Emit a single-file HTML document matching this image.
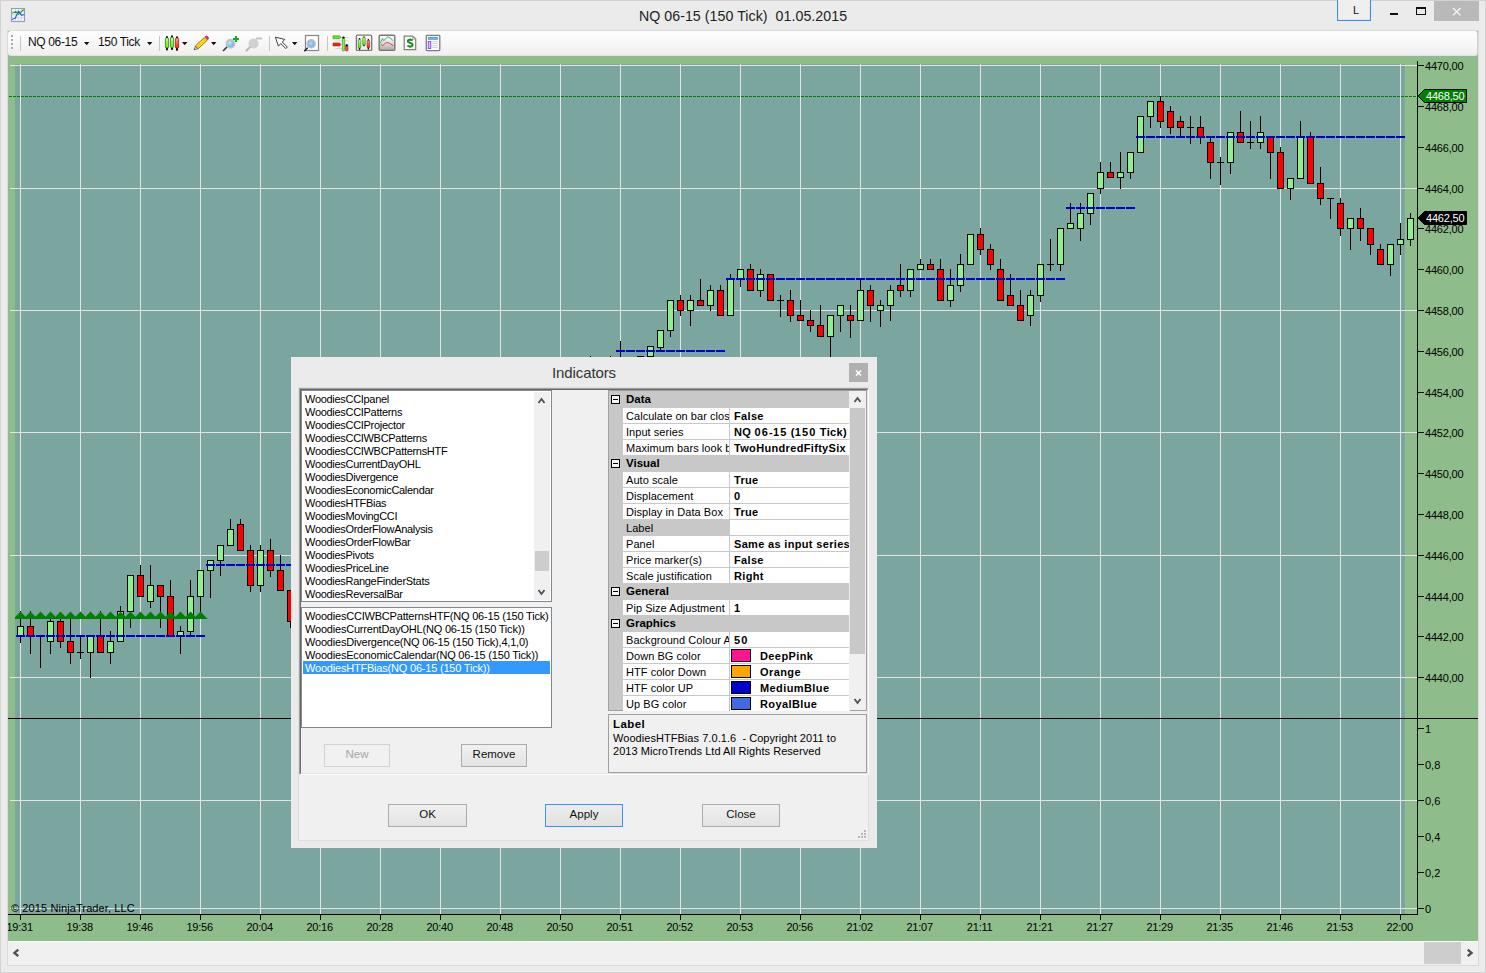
<!DOCTYPE html><html><head><meta charset="utf-8"><style>
*{box-sizing:border-box;margin:0;padding:0}
html,body{width:1486px;height:973px;overflow:hidden;background:#ebebeb;font-family:"Liberation Sans",sans-serif}
.abs{position:absolute}
.chart{position:absolute;left:0;top:0}
.txt{white-space:nowrap;color:#000}
.btn{text-align:center;font-size:11.5px;color:#111}
</style></head><body>
<svg class="chart" width="1486" height="973" viewBox="0 0 1486 973" shape-rendering="crispEdges">
<defs><clipPath id="teal"><rect x="15" y="64" width="1390" height="850"/></clipPath><clipPath id="plot"><rect x="15" y="64" width="1402" height="850"/></clipPath></defs>
<rect x="8" y="31" width="1470" height="910" fill="#8fbc8b"/>
<rect x="15" y="64" width="1390" height="850" fill="#7ba6a0"/>
<rect x="20" y="64" width="1" height="850" fill="#e4e4e4"/>
<rect x="80" y="64" width="1" height="850" fill="#e4e4e4"/>
<rect x="140" y="64" width="1" height="850" fill="#e4e4e4"/>
<rect x="200" y="64" width="1" height="850" fill="#e4e4e4"/>
<rect x="260" y="64" width="1" height="850" fill="#e4e4e4"/>
<rect x="320" y="64" width="1" height="850" fill="#e4e4e4"/>
<rect x="380" y="64" width="1" height="850" fill="#e4e4e4"/>
<rect x="440" y="64" width="1" height="850" fill="#e4e4e4"/>
<rect x="500" y="64" width="1" height="850" fill="#e4e4e4"/>
<rect x="560" y="64" width="1" height="850" fill="#e4e4e4"/>
<rect x="620" y="64" width="1" height="850" fill="#e4e4e4"/>
<rect x="680" y="64" width="1" height="850" fill="#e4e4e4"/>
<rect x="740" y="64" width="1" height="850" fill="#e4e4e4"/>
<rect x="800" y="64" width="1" height="850" fill="#e4e4e4"/>
<rect x="860" y="64" width="1" height="850" fill="#e4e4e4"/>
<rect x="920" y="64" width="1" height="850" fill="#e4e4e4"/>
<rect x="980" y="64" width="1" height="850" fill="#e4e4e4"/>
<rect x="1040" y="64" width="1" height="850" fill="#e4e4e4"/>
<rect x="1100" y="64" width="1" height="850" fill="#e4e4e4"/>
<rect x="1160" y="64" width="1" height="850" fill="#e4e4e4"/>
<rect x="1220" y="64" width="1" height="850" fill="#e4e4e4"/>
<rect x="1280" y="64" width="1" height="850" fill="#e4e4e4"/>
<rect x="1340" y="64" width="1" height="850" fill="#e4e4e4"/>
<rect x="1400" y="64" width="1" height="850" fill="#e4e4e4"/>
<rect x="10" y="65" width="1407" height="1" fill="#e4e4e4"/>
<rect x="10" y="188" width="1407" height="1" fill="#e4e4e4"/>
<rect x="10" y="310" width="1407" height="1" fill="#e4e4e4"/>
<rect x="10" y="432" width="1407" height="1" fill="#e4e4e4"/>
<rect x="10" y="555" width="1407" height="1" fill="#e4e4e4"/>
<rect x="10" y="677" width="1407" height="1" fill="#e4e4e4"/>
<rect x="10" y="800" width="1407" height="1" fill="#e4e4e4"/>
<rect x="10" y="908" width="1407" height="1" fill="#e4e4e4"/>
<line x1="9" y1="96.5" x2="1417" y2="96.5" stroke="#008000" stroke-width="1" stroke-dasharray="3 1"/>
<g clip-path="url(#plot)">
<rect x="20" y="611" width="1" height="32" fill="#000"/>
<rect x="17.5" y="626.5" width="6" height="10" fill="#90ee90" stroke="#000" stroke-width="1"/>
<rect x="30" y="611" width="1" height="43" fill="#000"/>
<rect x="27.5" y="626.5" width="6" height="10" fill="#ff0000" stroke="#000" stroke-width="1"/>
<rect x="40" y="636" width="1" height="32" fill="#000"/>
<rect x="37" y="636" width="7" height="1" fill="#000"/>
<rect x="50" y="616" width="1" height="38" fill="#000"/>
<rect x="47.5" y="621.5" width="6" height="20" fill="#90ee90" stroke="#000" stroke-width="1"/>
<rect x="60" y="616" width="1" height="32" fill="#000"/>
<rect x="57.5" y="621.5" width="6" height="20" fill="#ff0000" stroke="#000" stroke-width="1"/>
<rect x="70" y="616" width="1" height="48" fill="#000"/>
<rect x="67.5" y="641.5" width="6" height="11" fill="#ff0000" stroke="#000" stroke-width="1"/>
<rect x="80" y="637" width="1" height="22" fill="#000"/>
<rect x="77" y="652" width="7" height="1" fill="#000"/>
<rect x="90" y="636" width="1" height="42" fill="#000"/>
<rect x="87.5" y="636.5" width="6" height="16" fill="#90ee90" stroke="#000" stroke-width="1"/>
<rect x="100" y="611" width="1" height="42" fill="#000"/>
<rect x="97.5" y="636.5" width="6" height="16" fill="#ff0000" stroke="#000" stroke-width="1"/>
<rect x="110" y="631" width="1" height="33" fill="#000"/>
<rect x="107.5" y="641.5" width="6" height="11" fill="#90ee90" stroke="#000" stroke-width="1"/>
<rect x="120" y="606" width="1" height="36" fill="#000"/>
<rect x="117.5" y="611.5" width="6" height="30" fill="#90ee90" stroke="#000" stroke-width="1"/>
<rect x="130" y="575" width="1" height="53" fill="#000"/>
<rect x="127.5" y="575.5" width="6" height="36" fill="#90ee90" stroke="#000" stroke-width="1"/>
<rect x="140" y="565" width="1" height="32" fill="#000"/>
<rect x="137.5" y="575.5" width="6" height="21" fill="#ff0000" stroke="#000" stroke-width="1"/>
<rect x="150" y="565" width="1" height="43" fill="#000"/>
<rect x="147.5" y="585.5" width="6" height="16" fill="#90ee90" stroke="#000" stroke-width="1"/>
<rect x="160" y="585" width="1" height="43" fill="#000"/>
<rect x="157.5" y="585.5" width="6" height="11" fill="#ff0000" stroke="#000" stroke-width="1"/>
<rect x="170" y="580" width="1" height="57" fill="#000"/>
<rect x="167.5" y="596.5" width="6" height="40" fill="#ff0000" stroke="#000" stroke-width="1"/>
<rect x="180" y="626" width="1" height="28" fill="#000"/>
<rect x="177.5" y="631.5" width="6" height="5" fill="#90ee90" stroke="#000" stroke-width="1"/>
<rect x="190" y="580" width="1" height="57" fill="#000"/>
<rect x="187.5" y="596.5" width="6" height="35" fill="#90ee90" stroke="#000" stroke-width="1"/>
<rect x="200" y="570" width="1" height="43" fill="#000"/>
<rect x="197.5" y="570.5" width="6" height="26" fill="#90ee90" stroke="#000" stroke-width="1"/>
<rect x="210" y="560" width="1" height="38" fill="#000"/>
<rect x="207.5" y="560.5" width="6" height="10" fill="#90ee90" stroke="#000" stroke-width="1"/>
<rect x="220" y="545" width="1" height="31" fill="#000"/>
<rect x="217.5" y="545.5" width="6" height="15" fill="#90ee90" stroke="#000" stroke-width="1"/>
<rect x="230" y="519" width="1" height="27" fill="#000"/>
<rect x="227.5" y="529.5" width="6" height="16" fill="#90ee90" stroke="#000" stroke-width="1"/>
<rect x="240" y="519" width="1" height="32" fill="#000"/>
<rect x="237.5" y="524.5" width="6" height="26" fill="#ff0000" stroke="#000" stroke-width="1"/>
<rect x="250" y="545" width="1" height="47" fill="#000"/>
<rect x="247.5" y="550.5" width="6" height="35" fill="#ff0000" stroke="#000" stroke-width="1"/>
<rect x="260" y="545" width="1" height="47" fill="#000"/>
<rect x="257.5" y="550.5" width="6" height="35" fill="#90ee90" stroke="#000" stroke-width="1"/>
<rect x="270" y="539" width="1" height="38" fill="#000"/>
<rect x="267.5" y="550.5" width="6" height="20" fill="#ff0000" stroke="#000" stroke-width="1"/>
<rect x="280" y="555" width="1" height="36" fill="#000"/>
<rect x="277.5" y="570.5" width="6" height="20" fill="#ff0000" stroke="#000" stroke-width="1"/>
<rect x="290" y="590" width="1" height="38" fill="#000"/>
<rect x="287.5" y="590.5" width="6" height="31" fill="#ff0000" stroke="#000" stroke-width="1"/>
<rect x="590" y="356" width="1" height="45" fill="#000"/>
<rect x="587" y="380" width="7" height="1" fill="#000"/>
<rect x="610" y="356" width="1" height="45" fill="#000"/>
<rect x="607" y="380" width="7" height="1" fill="#000"/>
<rect x="620" y="341" width="1" height="50" fill="#000"/>
<rect x="617.5" y="360.5" width="6" height="20" fill="#90ee90" stroke="#000" stroke-width="1"/>
<rect x="640" y="380" width="1" height="21" fill="#000"/>
<rect x="637.5" y="356.5" width="6" height="34" fill="#90ee90" stroke="#000" stroke-width="1"/>
<rect x="650" y="346" width="1" height="45" fill="#000"/>
<rect x="647.5" y="346.5" width="6" height="10" fill="#90ee90" stroke="#000" stroke-width="1"/>
<rect x="660" y="330" width="1" height="21" fill="#000"/>
<rect x="657.5" y="330.5" width="6" height="17" fill="#90ee90" stroke="#000" stroke-width="1"/>
<rect x="670" y="300" width="1" height="37" fill="#000"/>
<rect x="667.5" y="300.5" width="6" height="30" fill="#90ee90" stroke="#000" stroke-width="1"/>
<rect x="680" y="295" width="1" height="21" fill="#000"/>
<rect x="677.5" y="300.5" width="6" height="10" fill="#ff0000" stroke="#000" stroke-width="1"/>
<rect x="690" y="295" width="1" height="31" fill="#000"/>
<rect x="687.5" y="300.5" width="6" height="10" fill="#90ee90" stroke="#000" stroke-width="1"/>
<rect x="700" y="279" width="1" height="27" fill="#000"/>
<rect x="697.5" y="300.5" width="6" height="5" fill="#ff0000" stroke="#000" stroke-width="1"/>
<rect x="710" y="285" width="1" height="26" fill="#000"/>
<rect x="707.5" y="290.5" width="6" height="15" fill="#90ee90" stroke="#000" stroke-width="1"/>
<rect x="720" y="285" width="1" height="31" fill="#000"/>
<rect x="717.5" y="290.5" width="6" height="25" fill="#ff0000" stroke="#000" stroke-width="1"/>
<rect x="730" y="274" width="1" height="42" fill="#000"/>
<rect x="727.5" y="279.5" width="6" height="36" fill="#90ee90" stroke="#000" stroke-width="1"/>
<rect x="740" y="269" width="1" height="18" fill="#000"/>
<rect x="737.5" y="269.5" width="6" height="10" fill="#90ee90" stroke="#000" stroke-width="1"/>
<rect x="750" y="264" width="1" height="27" fill="#000"/>
<rect x="747.5" y="269.5" width="6" height="21" fill="#ff0000" stroke="#000" stroke-width="1"/>
<rect x="760" y="269" width="1" height="28" fill="#000"/>
<rect x="757.5" y="274.5" width="6" height="16" fill="#90ee90" stroke="#000" stroke-width="1"/>
<rect x="770" y="274" width="1" height="27" fill="#000"/>
<rect x="767.5" y="274.5" width="6" height="26" fill="#ff0000" stroke="#000" stroke-width="1"/>
<rect x="780" y="295" width="1" height="22" fill="#000"/>
<rect x="777" y="300" width="7" height="1" fill="#000"/>
<rect x="790" y="290" width="1" height="32" fill="#000"/>
<rect x="787.5" y="300.5" width="6" height="15" fill="#ff0000" stroke="#000" stroke-width="1"/>
<rect x="800" y="300" width="1" height="21" fill="#000"/>
<rect x="797.5" y="315.5" width="6" height="5" fill="#ff0000" stroke="#000" stroke-width="1"/>
<rect x="810" y="310" width="1" height="22" fill="#000"/>
<rect x="807.5" y="320.5" width="6" height="5" fill="#ff0000" stroke="#000" stroke-width="1"/>
<rect x="820" y="305" width="1" height="32" fill="#000"/>
<rect x="817.5" y="325.5" width="6" height="11" fill="#ff0000" stroke="#000" stroke-width="1"/>
<rect x="830" y="315" width="1" height="42" fill="#000"/>
<rect x="827.5" y="315.5" width="6" height="21" fill="#90ee90" stroke="#000" stroke-width="1"/>
<rect x="840" y="305" width="1" height="27" fill="#000"/>
<rect x="837.5" y="305.5" width="6" height="10" fill="#90ee90" stroke="#000" stroke-width="1"/>
<rect x="850" y="305" width="1" height="33" fill="#000"/>
<rect x="847.5" y="315.5" width="6" height="5" fill="#ff0000" stroke="#000" stroke-width="1"/>
<rect x="860" y="279" width="1" height="42" fill="#000"/>
<rect x="857.5" y="290.5" width="6" height="30" fill="#90ee90" stroke="#000" stroke-width="1"/>
<rect x="870" y="285" width="1" height="37" fill="#000"/>
<rect x="867.5" y="290.5" width="6" height="15" fill="#ff0000" stroke="#000" stroke-width="1"/>
<rect x="880" y="300" width="1" height="27" fill="#000"/>
<rect x="877.5" y="305.5" width="6" height="5" fill="#90ee90" stroke="#000" stroke-width="1"/>
<rect x="890" y="285" width="1" height="36" fill="#000"/>
<rect x="887.5" y="290.5" width="6" height="15" fill="#90ee90" stroke="#000" stroke-width="1"/>
<rect x="900" y="264" width="1" height="33" fill="#000"/>
<rect x="897.5" y="285.5" width="6" height="5" fill="#ff0000" stroke="#000" stroke-width="1"/>
<rect x="910" y="269" width="1" height="28" fill="#000"/>
<rect x="907.5" y="269.5" width="6" height="21" fill="#90ee90" stroke="#000" stroke-width="1"/>
<rect x="920" y="259" width="1" height="11" fill="#000"/>
<rect x="917.5" y="264.5" width="6" height="5" fill="#90ee90" stroke="#000" stroke-width="1"/>
<rect x="930" y="259" width="1" height="11" fill="#000"/>
<rect x="927.5" y="264.5" width="6" height="5" fill="#ff0000" stroke="#000" stroke-width="1"/>
<rect x="940" y="259" width="1" height="42" fill="#000"/>
<rect x="937.5" y="269.5" width="6" height="31" fill="#ff0000" stroke="#000" stroke-width="1"/>
<rect x="950" y="269" width="1" height="38" fill="#000"/>
<rect x="947.5" y="285.5" width="6" height="15" fill="#90ee90" stroke="#000" stroke-width="1"/>
<rect x="960" y="254" width="1" height="38" fill="#000"/>
<rect x="957.5" y="264.5" width="6" height="21" fill="#90ee90" stroke="#000" stroke-width="1"/>
<rect x="970" y="234" width="1" height="31" fill="#000"/>
<rect x="967.5" y="234.5" width="6" height="30" fill="#90ee90" stroke="#000" stroke-width="1"/>
<rect x="980" y="228" width="1" height="27" fill="#000"/>
<rect x="977.5" y="234.5" width="6" height="15" fill="#ff0000" stroke="#000" stroke-width="1"/>
<rect x="990" y="244" width="1" height="26" fill="#000"/>
<rect x="987.5" y="249.5" width="6" height="15" fill="#ff0000" stroke="#000" stroke-width="1"/>
<rect x="1000" y="259" width="1" height="42" fill="#000"/>
<rect x="997.5" y="269.5" width="6" height="31" fill="#ff0000" stroke="#000" stroke-width="1"/>
<rect x="1010" y="274" width="1" height="32" fill="#000"/>
<rect x="1007.5" y="295.5" width="6" height="10" fill="#ff0000" stroke="#000" stroke-width="1"/>
<rect x="1020" y="290" width="1" height="31" fill="#000"/>
<rect x="1017.5" y="305.5" width="6" height="15" fill="#ff0000" stroke="#000" stroke-width="1"/>
<rect x="1030" y="290" width="1" height="36" fill="#000"/>
<rect x="1027.5" y="295.5" width="6" height="20" fill="#90ee90" stroke="#000" stroke-width="1"/>
<rect x="1040" y="264" width="1" height="38" fill="#000"/>
<rect x="1037.5" y="264.5" width="6" height="31" fill="#90ee90" stroke="#000" stroke-width="1"/>
<rect x="1050" y="239" width="1" height="32" fill="#000"/>
<rect x="1047" y="264" width="7" height="1" fill="#000"/>
<rect x="1060" y="228" width="1" height="43" fill="#000"/>
<rect x="1057.5" y="228.5" width="6" height="36" fill="#90ee90" stroke="#000" stroke-width="1"/>
<rect x="1070" y="203" width="1" height="26" fill="#000"/>
<rect x="1067.5" y="223.5" width="6" height="5" fill="#90ee90" stroke="#000" stroke-width="1"/>
<rect x="1080" y="203" width="1" height="38" fill="#000"/>
<rect x="1077.5" y="213.5" width="6" height="15" fill="#90ee90" stroke="#000" stroke-width="1"/>
<rect x="1090" y="193" width="1" height="32" fill="#000"/>
<rect x="1087.5" y="193.5" width="6" height="20" fill="#90ee90" stroke="#000" stroke-width="1"/>
<rect x="1100" y="162" width="1" height="32" fill="#000"/>
<rect x="1097.5" y="172.5" width="6" height="16" fill="#90ee90" stroke="#000" stroke-width="1"/>
<rect x="1110" y="162" width="1" height="16" fill="#000"/>
<rect x="1107.5" y="172.5" width="6" height="5" fill="#ff0000" stroke="#000" stroke-width="1"/>
<rect x="1120" y="152" width="1" height="37" fill="#000"/>
<rect x="1117.5" y="172.5" width="6" height="5" fill="#90ee90" stroke="#000" stroke-width="1"/>
<rect x="1130" y="152" width="1" height="27" fill="#000"/>
<rect x="1127.5" y="152.5" width="6" height="20" fill="#90ee90" stroke="#000" stroke-width="1"/>
<rect x="1140" y="116" width="1" height="37" fill="#000"/>
<rect x="1137.5" y="116.5" width="6" height="36" fill="#90ee90" stroke="#000" stroke-width="1"/>
<rect x="1150" y="101" width="1" height="27" fill="#000"/>
<rect x="1147.5" y="101.5" width="6" height="15" fill="#90ee90" stroke="#000" stroke-width="1"/>
<rect x="1160" y="96" width="1" height="32" fill="#000"/>
<rect x="1157.5" y="101.5" width="6" height="20" fill="#ff0000" stroke="#000" stroke-width="1"/>
<rect x="1170" y="106" width="1" height="28" fill="#000"/>
<rect x="1167.5" y="111.5" width="6" height="16" fill="#ff0000" stroke="#000" stroke-width="1"/>
<rect x="1180" y="116" width="1" height="21" fill="#000"/>
<rect x="1177.5" y="121.5" width="6" height="6" fill="#ff0000" stroke="#000" stroke-width="1"/>
<rect x="1190" y="116" width="1" height="28" fill="#000"/>
<rect x="1187" y="127" width="7" height="1" fill="#000"/>
<rect x="1200" y="116" width="1" height="28" fill="#000"/>
<rect x="1197.5" y="127.5" width="6" height="9" fill="#ff0000" stroke="#000" stroke-width="1"/>
<rect x="1210" y="137" width="1" height="42" fill="#000"/>
<rect x="1207.5" y="142.5" width="6" height="20" fill="#ff0000" stroke="#000" stroke-width="1"/>
<rect x="1220" y="157" width="1" height="28" fill="#000"/>
<rect x="1217" y="162" width="7" height="1" fill="#000"/>
<rect x="1230" y="132" width="1" height="42" fill="#000"/>
<rect x="1227.5" y="132.5" width="6" height="30" fill="#90ee90" stroke="#000" stroke-width="1"/>
<rect x="1240" y="111" width="1" height="32" fill="#000"/>
<rect x="1237.5" y="132.5" width="6" height="10" fill="#ff0000" stroke="#000" stroke-width="1"/>
<rect x="1250" y="121" width="1" height="28" fill="#000"/>
<rect x="1247" y="142" width="7" height="1" fill="#000"/>
<rect x="1260" y="116" width="1" height="33" fill="#000"/>
<rect x="1257.5" y="132.5" width="6" height="10" fill="#90ee90" stroke="#000" stroke-width="1"/>
<rect x="1270" y="137" width="1" height="42" fill="#000"/>
<rect x="1267.5" y="137.5" width="6" height="15" fill="#ff0000" stroke="#000" stroke-width="1"/>
<rect x="1280" y="147" width="1" height="42" fill="#000"/>
<rect x="1277.5" y="152.5" width="6" height="36" fill="#ff0000" stroke="#000" stroke-width="1"/>
<rect x="1290" y="178" width="1" height="22" fill="#000"/>
<rect x="1287.5" y="178.5" width="6" height="10" fill="#90ee90" stroke="#000" stroke-width="1"/>
<rect x="1300" y="121" width="1" height="58" fill="#000"/>
<rect x="1297.5" y="137.5" width="6" height="41" fill="#90ee90" stroke="#000" stroke-width="1"/>
<rect x="1310" y="132" width="1" height="52" fill="#000"/>
<rect x="1307.5" y="137.5" width="6" height="46" fill="#ff0000" stroke="#000" stroke-width="1"/>
<rect x="1320" y="167" width="1" height="38" fill="#000"/>
<rect x="1317.5" y="183.5" width="6" height="15" fill="#ff0000" stroke="#000" stroke-width="1"/>
<rect x="1330" y="198" width="1" height="21" fill="#000"/>
<rect x="1327" y="198" width="7" height="1" fill="#000"/>
<rect x="1340" y="198" width="1" height="38" fill="#000"/>
<rect x="1337.5" y="203.5" width="6" height="25" fill="#ff0000" stroke="#000" stroke-width="1"/>
<rect x="1350" y="218" width="1" height="32" fill="#000"/>
<rect x="1347.5" y="218.5" width="6" height="10" fill="#90ee90" stroke="#000" stroke-width="1"/>
<rect x="1360" y="208" width="1" height="33" fill="#000"/>
<rect x="1357.5" y="218.5" width="6" height="10" fill="#ff0000" stroke="#000" stroke-width="1"/>
<rect x="1370" y="228" width="1" height="27" fill="#000"/>
<rect x="1367.5" y="228.5" width="6" height="16" fill="#ff0000" stroke="#000" stroke-width="1"/>
<rect x="1380" y="244" width="1" height="21" fill="#000"/>
<rect x="1377.5" y="249.5" width="6" height="15" fill="#ff0000" stroke="#000" stroke-width="1"/>
<rect x="1390" y="244" width="1" height="32" fill="#000"/>
<rect x="1387.5" y="244.5" width="6" height="20" fill="#90ee90" stroke="#000" stroke-width="1"/>
<rect x="1400" y="223" width="1" height="32" fill="#000"/>
<rect x="1397.5" y="239.5" width="6" height="5" fill="#90ee90" stroke="#000" stroke-width="1"/>
<rect x="1410" y="213" width="1" height="33" fill="#000"/>
<rect x="1407.5" y="218.5" width="6" height="21" fill="#90ee90" stroke="#000" stroke-width="1"/>
</g>
<g fill="#0000cd">
<rect x="16" y="635" width="9" height="2"/>
<rect x="26" y="635" width="9" height="2"/>
<rect x="36" y="635" width="9" height="2"/>
<rect x="46" y="635" width="9" height="2"/>
<rect x="56" y="635" width="9" height="2"/>
<rect x="66" y="635" width="9" height="2"/>
<rect x="76" y="635" width="9" height="2"/>
<rect x="86" y="635" width="9" height="2"/>
<rect x="96" y="635" width="9" height="2"/>
<rect x="106" y="635" width="9" height="2"/>
<rect x="116" y="635" width="9" height="2"/>
<rect x="126" y="635" width="9" height="2"/>
<rect x="136" y="635" width="9" height="2"/>
<rect x="146" y="635" width="9" height="2"/>
<rect x="156" y="635" width="9" height="2"/>
<rect x="166" y="635" width="9" height="2"/>
<rect x="176" y="635" width="9" height="2"/>
<rect x="186" y="635" width="9" height="2"/>
<rect x="196" y="635" width="9" height="2"/>
<rect x="206" y="564" width="9" height="2"/>
<rect x="216" y="564" width="9" height="2"/>
<rect x="226" y="564" width="9" height="2"/>
<rect x="236" y="564" width="9" height="2"/>
<rect x="246" y="564" width="9" height="2"/>
<rect x="256" y="564" width="9" height="2"/>
<rect x="266" y="564" width="9" height="2"/>
<rect x="276" y="564" width="9" height="2"/>
<rect x="286" y="564" width="9" height="2"/>
<rect x="296" y="564" width="9" height="2"/>
<rect x="306" y="564" width="9" height="2"/>
<rect x="316" y="564" width="9" height="2"/>
<rect x="326" y="564" width="9" height="2"/>
<rect x="336" y="564" width="9" height="2"/>
<rect x="346" y="564" width="9" height="2"/>
<rect x="356" y="564" width="9" height="2"/>
<rect x="366" y="564" width="9" height="2"/>
<rect x="376" y="564" width="9" height="2"/>
<rect x="386" y="564" width="9" height="2"/>
<rect x="396" y="564" width="9" height="2"/>
<rect x="406" y="564" width="9" height="2"/>
<rect x="416" y="564" width="9" height="2"/>
<rect x="426" y="564" width="9" height="2"/>
<rect x="436" y="564" width="9" height="2"/>
<rect x="446" y="564" width="9" height="2"/>
<rect x="456" y="564" width="9" height="2"/>
<rect x="466" y="564" width="9" height="2"/>
<rect x="476" y="564" width="9" height="2"/>
<rect x="486" y="564" width="9" height="2"/>
<rect x="496" y="564" width="9" height="2"/>
<rect x="506" y="564" width="9" height="2"/>
<rect x="516" y="564" width="9" height="2"/>
<rect x="526" y="564" width="9" height="2"/>
<rect x="536" y="564" width="9" height="2"/>
<rect x="546" y="564" width="9" height="2"/>
<rect x="556" y="564" width="9" height="2"/>
<rect x="566" y="564" width="9" height="2"/>
<rect x="576" y="564" width="9" height="2"/>
<rect x="586" y="564" width="9" height="2"/>
<rect x="596" y="564" width="9" height="2"/>
<rect x="606" y="564" width="9" height="2"/>
<rect x="616" y="350" width="9" height="2"/>
<rect x="626" y="350" width="9" height="2"/>
<rect x="636" y="350" width="9" height="2"/>
<rect x="646" y="350" width="9" height="2"/>
<rect x="656" y="350" width="9" height="2"/>
<rect x="666" y="350" width="9" height="2"/>
<rect x="676" y="350" width="9" height="2"/>
<rect x="686" y="350" width="9" height="2"/>
<rect x="696" y="350" width="9" height="2"/>
<rect x="706" y="350" width="9" height="2"/>
<rect x="716" y="350" width="9" height="2"/>
<rect x="726" y="278" width="9" height="2"/>
<rect x="736" y="278" width="9" height="2"/>
<rect x="746" y="278" width="9" height="2"/>
<rect x="756" y="278" width="9" height="2"/>
<rect x="766" y="278" width="9" height="2"/>
<rect x="776" y="278" width="9" height="2"/>
<rect x="786" y="278" width="9" height="2"/>
<rect x="796" y="278" width="9" height="2"/>
<rect x="806" y="278" width="9" height="2"/>
<rect x="816" y="278" width="9" height="2"/>
<rect x="826" y="278" width="9" height="2"/>
<rect x="836" y="278" width="9" height="2"/>
<rect x="846" y="278" width="9" height="2"/>
<rect x="856" y="278" width="9" height="2"/>
<rect x="866" y="278" width="9" height="2"/>
<rect x="876" y="278" width="9" height="2"/>
<rect x="886" y="278" width="9" height="2"/>
<rect x="896" y="278" width="9" height="2"/>
<rect x="906" y="278" width="9" height="2"/>
<rect x="916" y="278" width="9" height="2"/>
<rect x="926" y="278" width="9" height="2"/>
<rect x="936" y="278" width="9" height="2"/>
<rect x="946" y="278" width="9" height="2"/>
<rect x="956" y="278" width="9" height="2"/>
<rect x="966" y="278" width="9" height="2"/>
<rect x="976" y="278" width="9" height="2"/>
<rect x="986" y="278" width="9" height="2"/>
<rect x="996" y="278" width="9" height="2"/>
<rect x="1006" y="278" width="9" height="2"/>
<rect x="1016" y="278" width="9" height="2"/>
<rect x="1026" y="278" width="9" height="2"/>
<rect x="1036" y="278" width="9" height="2"/>
<rect x="1046" y="278" width="9" height="2"/>
<rect x="1056" y="278" width="9" height="2"/>
<rect x="1066" y="207" width="9" height="2"/>
<rect x="1076" y="207" width="9" height="2"/>
<rect x="1086" y="207" width="9" height="2"/>
<rect x="1096" y="207" width="9" height="2"/>
<rect x="1106" y="207" width="9" height="2"/>
<rect x="1116" y="207" width="9" height="2"/>
<rect x="1126" y="207" width="9" height="2"/>
<rect x="1136" y="136" width="9" height="2"/>
<rect x="1146" y="136" width="9" height="2"/>
<rect x="1156" y="136" width="9" height="2"/>
<rect x="1166" y="136" width="9" height="2"/>
<rect x="1176" y="136" width="9" height="2"/>
<rect x="1186" y="136" width="9" height="2"/>
<rect x="1196" y="136" width="9" height="2"/>
<rect x="1206" y="136" width="9" height="2"/>
<rect x="1216" y="136" width="9" height="2"/>
<rect x="1226" y="136" width="9" height="2"/>
<rect x="1236" y="136" width="9" height="2"/>
<rect x="1246" y="136" width="9" height="2"/>
<rect x="1256" y="136" width="9" height="2"/>
<rect x="1266" y="136" width="9" height="2"/>
<rect x="1276" y="136" width="9" height="2"/>
<rect x="1286" y="136" width="9" height="2"/>
<rect x="1296" y="136" width="9" height="2"/>
<rect x="1306" y="136" width="9" height="2"/>
<rect x="1316" y="136" width="9" height="2"/>
<rect x="1326" y="136" width="9" height="2"/>
<rect x="1336" y="136" width="9" height="2"/>
<rect x="1346" y="136" width="9" height="2"/>
<rect x="1356" y="136" width="9" height="2"/>
<rect x="1366" y="136" width="9" height="2"/>
<rect x="1376" y="136" width="9" height="2"/>
<rect x="1386" y="136" width="9" height="2"/>
<rect x="1396" y="136" width="9" height="2"/>
</g>
<g fill="#008000" clip-path="url(#teal)" shape-rendering="geometricPrecision">
<polygon points="20.5,611.5 13.3,619 27.7,619"/>
<polygon points="30.5,611.5 23.3,619 37.7,619"/>
<polygon points="40.5,611.5 33.3,619 47.7,619"/>
<polygon points="50.5,611.5 43.3,619 57.7,619"/>
<polygon points="60.5,611.5 53.3,619 67.7,619"/>
<polygon points="70.5,611.5 63.3,619 77.7,619"/>
<polygon points="80.5,611.5 73.3,619 87.7,619"/>
<polygon points="90.5,611.5 83.3,619 97.7,619"/>
<polygon points="100.5,611.5 93.3,619 107.7,619"/>
<polygon points="110.5,611.5 103.3,619 117.7,619"/>
<polygon points="120.5,611.5 113.3,619 127.7,619"/>
<polygon points="130.5,611.5 123.3,619 137.7,619"/>
<polygon points="140.5,611.5 133.3,619 147.7,619"/>
<polygon points="150.5,611.5 143.3,619 157.7,619"/>
<polygon points="160.5,611.5 153.3,619 167.7,619"/>
<polygon points="170.5,611.5 163.3,619 177.7,619"/>
<polygon points="180.5,611.5 173.3,619 187.7,619"/>
<polygon points="190.5,611.5 183.3,619 197.7,619"/>
<polygon points="200.5,611.5 193.3,619 207.7,619"/>
</g>
<rect x="8" y="718" width="1470" height="1" fill="#000"/>
<rect x="1417" y="61" width="1" height="854" fill="#000"/>
<rect x="8" y="914" width="1410" height="1" fill="#000"/>
<g font-family="Liberation Sans, sans-serif" font-size="11" fill="#000" shape-rendering="geometricPrecision">
<rect x="1418" y="677" width="6" height="1" fill="#000"/>
<text x="1425" y="681.5" letter-spacing="-0.2">4440,00</text>
<rect x="1418" y="636" width="6" height="1" fill="#000"/>
<text x="1425" y="640.5" letter-spacing="-0.2">4442,00</text>
<rect x="1418" y="596" width="6" height="1" fill="#000"/>
<text x="1425" y="600.5" letter-spacing="-0.2">4444,00</text>
<rect x="1418" y="555" width="6" height="1" fill="#000"/>
<text x="1425" y="559.5" letter-spacing="-0.2">4446,00</text>
<rect x="1418" y="514" width="6" height="1" fill="#000"/>
<text x="1425" y="518.5" letter-spacing="-0.2">4448,00</text>
<rect x="1418" y="473" width="6" height="1" fill="#000"/>
<text x="1425" y="477.5" letter-spacing="-0.2">4450,00</text>
<rect x="1418" y="432" width="6" height="1" fill="#000"/>
<text x="1425" y="436.5" letter-spacing="-0.2">4452,00</text>
<rect x="1418" y="392" width="6" height="1" fill="#000"/>
<text x="1425" y="396.5" letter-spacing="-0.2">4454,00</text>
<rect x="1418" y="351" width="6" height="1" fill="#000"/>
<text x="1425" y="355.5" letter-spacing="-0.2">4456,00</text>
<rect x="1418" y="310" width="6" height="1" fill="#000"/>
<text x="1425" y="314.5" letter-spacing="-0.2">4458,00</text>
<rect x="1418" y="269" width="6" height="1" fill="#000"/>
<text x="1425" y="273.5" letter-spacing="-0.2">4460,00</text>
<rect x="1418" y="228" width="6" height="1" fill="#000"/>
<text x="1425" y="232.5" letter-spacing="-0.2">4462,00</text>
<rect x="1418" y="188" width="6" height="1" fill="#000"/>
<text x="1425" y="192.5" letter-spacing="-0.2">4464,00</text>
<rect x="1418" y="147" width="6" height="1" fill="#000"/>
<text x="1425" y="151.5" letter-spacing="-0.2">4466,00</text>
<rect x="1418" y="106" width="6" height="1" fill="#000"/>
<text x="1425" y="110.5" letter-spacing="-0.2">4468,00</text>
<rect x="1418" y="65" width="6" height="1" fill="#000"/>
<text x="1425" y="69.5" letter-spacing="-0.2">4470,00</text>
<rect x="1418" y="728" width="6" height="1" fill="#000"/>
<text x="1425" y="732.5">1</text>
<rect x="1418" y="764" width="6" height="1" fill="#000"/>
<text x="1425" y="768.5">0,8</text>
<rect x="1418" y="800" width="6" height="1" fill="#000"/>
<text x="1425" y="804.5">0,6</text>
<rect x="1418" y="836" width="6" height="1" fill="#000"/>
<text x="1425" y="840.5">0,4</text>
<rect x="1418" y="872" width="6" height="1" fill="#000"/>
<text x="1425" y="876.5">0,2</text>
<rect x="1418" y="908" width="6" height="1" fill="#000"/>
<text x="1425" y="912.5">0</text>
<rect x="20" y="915" width="1" height="5" fill="#000"/>
<text x="19.7" y="931" text-anchor="middle" letter-spacing="-0.2">19:31</text>
<rect x="80" y="915" width="1" height="5" fill="#000"/>
<text x="79.7" y="931" text-anchor="middle" letter-spacing="-0.2">19:38</text>
<rect x="140" y="915" width="1" height="5" fill="#000"/>
<text x="139.7" y="931" text-anchor="middle" letter-spacing="-0.2">19:46</text>
<rect x="200" y="915" width="1" height="5" fill="#000"/>
<text x="199.7" y="931" text-anchor="middle" letter-spacing="-0.2">19:56</text>
<rect x="260" y="915" width="1" height="5" fill="#000"/>
<text x="259.7" y="931" text-anchor="middle" letter-spacing="-0.2">20:04</text>
<rect x="320" y="915" width="1" height="5" fill="#000"/>
<text x="319.7" y="931" text-anchor="middle" letter-spacing="-0.2">20:16</text>
<rect x="380" y="915" width="1" height="5" fill="#000"/>
<text x="379.7" y="931" text-anchor="middle" letter-spacing="-0.2">20:28</text>
<rect x="440" y="915" width="1" height="5" fill="#000"/>
<text x="439.7" y="931" text-anchor="middle" letter-spacing="-0.2">20:40</text>
<rect x="500" y="915" width="1" height="5" fill="#000"/>
<text x="499.7" y="931" text-anchor="middle" letter-spacing="-0.2">20:48</text>
<rect x="560" y="915" width="1" height="5" fill="#000"/>
<text x="559.7" y="931" text-anchor="middle" letter-spacing="-0.2">20:50</text>
<rect x="620" y="915" width="1" height="5" fill="#000"/>
<text x="619.7" y="931" text-anchor="middle" letter-spacing="-0.2">20:51</text>
<rect x="680" y="915" width="1" height="5" fill="#000"/>
<text x="679.7" y="931" text-anchor="middle" letter-spacing="-0.2">20:52</text>
<rect x="740" y="915" width="1" height="5" fill="#000"/>
<text x="739.7" y="931" text-anchor="middle" letter-spacing="-0.2">20:53</text>
<rect x="800" y="915" width="1" height="5" fill="#000"/>
<text x="799.7" y="931" text-anchor="middle" letter-spacing="-0.2">20:56</text>
<rect x="860" y="915" width="1" height="5" fill="#000"/>
<text x="859.7" y="931" text-anchor="middle" letter-spacing="-0.2">21:02</text>
<rect x="920" y="915" width="1" height="5" fill="#000"/>
<text x="919.7" y="931" text-anchor="middle" letter-spacing="-0.2">21:07</text>
<rect x="980" y="915" width="1" height="5" fill="#000"/>
<text x="979.7" y="931" text-anchor="middle" letter-spacing="-0.2">21:11</text>
<rect x="1040" y="915" width="1" height="5" fill="#000"/>
<text x="1039.7" y="931" text-anchor="middle" letter-spacing="-0.2">21:21</text>
<rect x="1100" y="915" width="1" height="5" fill="#000"/>
<text x="1099.7" y="931" text-anchor="middle" letter-spacing="-0.2">21:27</text>
<rect x="1160" y="915" width="1" height="5" fill="#000"/>
<text x="1159.7" y="931" text-anchor="middle" letter-spacing="-0.2">21:29</text>
<rect x="1220" y="915" width="1" height="5" fill="#000"/>
<text x="1219.7" y="931" text-anchor="middle" letter-spacing="-0.2">21:35</text>
<rect x="1280" y="915" width="1" height="5" fill="#000"/>
<text x="1279.7" y="931" text-anchor="middle" letter-spacing="-0.2">21:46</text>
<rect x="1340" y="915" width="1" height="5" fill="#000"/>
<text x="1339.7" y="931" text-anchor="middle" letter-spacing="-0.2">21:53</text>
<rect x="1400" y="915" width="1" height="5" fill="#000"/>
<text x="1399.7" y="931" text-anchor="middle" letter-spacing="-0.2">22:00</text>
<text x="11" y="912" letter-spacing="0.1">© 2015 NinjaTrader, LLC</text>
</g>
<g shape-rendering="geometricPrecision">
<polygon points="1418,96 1424.5,89.5 1466.5,89.5 1466.5,102.5 1424.5,102.5" fill="#008000" stroke="#000" stroke-width="1"/>
<text x="1426" y="100" font-family="Liberation Sans, sans-serif" font-size="11" fill="#fff" letter-spacing="-0.2">4468,50</text>
<polygon points="1418,218 1424.5,211.5 1466.5,211.5 1466.5,224.5 1424.5,224.5" fill="#000" stroke="#000" stroke-width="1"/>
<text x="1426" y="222" font-family="Liberation Sans, sans-serif" font-size="11" fill="#fff" letter-spacing="-0.2">4462,50</text>
</g>
</svg>
<div class="abs" style="left:0;top:0;width:1486px;height:1px;background:#d2d2d2"></div>
<div class="abs" style="left:0;top:0;width:1px;height:973px;background:#d2d2d2"></div>
<div class="abs" style="left:1485px;top:0;width:1px;height:973px;background:#d2d2d2"></div>
<div class="abs" style="left:0;top:972px;width:1486px;height:1px;background:#d2d2d2"></div>
<svg class="abs" style="left:10px;top:7px" width="17" height="17" viewBox="0 0 17 17">
<rect x="1.5" y="1.5" width="13" height="13" fill="#f6f4fc" stroke="#9a9cb4" stroke-width="1.1"/>
<path d="M5.4 2v12M8.3 2v12M11.3 2v12M2 4.8h12M2 7.8h12M2 10.8h12" stroke="#cfd0e6" stroke-width="0.8"/>
<path d="M2.2 12.4 L5.4 11 L6.8 7.8 L8.4 4.1 L11.5 8.3 L14.5 7.5" fill="none" stroke="#1a5ae0" stroke-width="1.1" stroke-linejoin="round"/>
<path d="M2.2 6.4 L5.6 4.4 L8.4 7.3 L13.75 2.5" fill="none" stroke="#10b010" stroke-width="1.1" stroke-linejoin="round"/>
</svg>
<div class="abs" style="left:0;top:6px;width:1486px;text-align:center;font-size:14.2px;color:#222;line-height:20px;letter-spacing:0.05px">NQ 06-15 (150 Tick)&nbsp; 01.05.2015</div>
<div class="abs" style="left:1337px;top:0;width:34px;height:21px;border:1px solid #3b8ff4;border-top:none;background:#efefef"></div>
<div class="abs" style="left:1338px;top:1px;width:32px;height:19px;border:1px solid #e4e4e4;border-top:none"></div>
<div class="abs" style="left:1339px;top:3px;width:34px;text-align:center;font-size:11px;line-height:14px;color:#111">L</div>
<div class="abs" style="left:1390px;top:13px;width:8px;height:2px;background:#111"></div>
<div class="abs" style="left:1416px;top:7px;width:10px;height:8px;border:1px solid #111;border-top-width:2px"></div>
<div class="abs" style="left:1434px;top:1px;width:45px;height:20px;background:#b9b9b9"></div>
<svg class="abs" style="left:1434px;top:1px" width="45" height="20"><path d="M19 7 L26.5 14.3 M26.5 7 L19 14.3" stroke="#fff" stroke-width="1.1"/></svg>
<div class="abs" style="left:7px;top:30px;width:1472px;height:936px;border:1px solid #dcdcdc"></div>
<div class="abs" style="left:8px;top:31px;width:1470px;height:25px;background:linear-gradient(#fdfdfd,#f7f7f7 50%,#efefef);border-radius:3px;border-bottom:1px solid #e2e2e2;border-right:1px solid #cfcfcf"></div>
<div class="abs" style="left:11px;top:35px;width:2px;height:2px;background:#a9a9a9"></div>
<div class="abs" style="left:11px;top:39px;width:2px;height:2px;background:#a9a9a9"></div>
<div class="abs" style="left:11px;top:43px;width:2px;height:2px;background:#a9a9a9"></div>
<div class="abs" style="left:11px;top:47px;width:2px;height:2px;background:#a9a9a9"></div>
<div class="abs" style="left:20px;top:36px;width:1px;height:15px;background:#c6c6c6"></div>
<div class="abs" style="left:28px;top:35px;font-size:12px;line-height:15px;letter-spacing:-0.35px;color:#111">NQ 06-15</div>
<svg class="abs" style="left:84px;top:42px" width="6" height="4"><path d="M0 0h5.4L2.7 3.2z" fill="#111"/></svg>
<div class="abs" style="left:98px;top:35px;font-size:12px;line-height:15px;letter-spacing:-0.35px;color:#111">150 Tick</div>
<svg class="abs" style="left:147px;top:42px" width="6" height="4"><path d="M0 0h5.4L2.7 3.2z" fill="#111"/></svg>
<div class="abs" style="left:159px;top:36px;width:1px;height:15px;background:#c6c6c6"></div>
<svg class="abs" style="left:164px;top:34px" width="18" height="18">
<defs><linearGradient id="tg" x1="0" y1="0" x2="0" y2="1"><stop offset="0" stop-color="#c0ffa8"/><stop offset="0.45" stop-color="#80ff40"/><stop offset="1" stop-color="#60ff00"/></linearGradient>
<linearGradient id="tr" x1="0" y1="0" x2="0" y2="1"><stop offset="0" stop-color="#ffa898"/><stop offset="0.5" stop-color="#ff6050"/><stop offset="1" stop-color="#ff2008"/></linearGradient></defs>
<rect x="2" y="2" width="1.9" height="14.5" rx="0.9" fill="#000"/><rect x="7.05" y="1.3" width="1.9" height="14.6" rx="0.9" fill="#000"/><rect x="12.05" y="2.2" width="1.9" height="14.6" rx="0.9" fill="#000"/>
<rect x="1.4" y="3.9" width="3.2" height="9.9" rx="0.8" fill="url(#tg)" stroke="#3a7a20" stroke-width="0.8"/>
<rect x="6.4" y="3.2" width="3.2" height="10.2" rx="0.8" fill="url(#tg)" stroke="#3a7a20" stroke-width="0.8"/>
<rect x="11.4" y="4.1" width="3.2" height="9.9" rx="0.8" fill="url(#tr)" stroke="#8a2a20" stroke-width="0.8"/>
</svg>
<svg class="abs" style="left:182px;top:42px" width="6" height="4"><path d="M0 0h5.4L2.7 3.2z" fill="#111"/></svg>
<svg class="abs" style="left:193px;top:34px" width="18" height="18">
<g transform="translate(1.1,15.8) rotate(-43)">
<path d="M0 0 L3.6 -2 L3.6 2 Z" fill="#d8c0a0" stroke="#6a5a48" stroke-width="0.6"/>
<path d="M0 0 L1.3 -0.7 L1.3 0.7 Z" fill="#222"/>
<rect x="3.6" y="-2" width="12.2" height="4" fill="#ffe000" stroke="#5a5020" stroke-width="0.7"/>
<path d="M4 0 H15.6" stroke="#f0c800" stroke-width="0.8"/>
<rect x="15.8" y="-2" width="1" height="4" fill="#b8b8c8"/>
<path d="M16.8 -2 H17 A2 2 0 0 1 17 2 H16.8 Z" fill="#ff3030" stroke="#a02020" stroke-width="0.5"/>
</g>
</svg>
<svg class="abs" style="left:211px;top:42px" width="6" height="4"><path d="M0 0h5.4L2.7 3.2z" fill="#111"/></svg>
<svg class="abs" style="left:222px;top:34px" width="18" height="18">
<defs><radialGradient id="lens" cx="0.4" cy="0.4" r="0.6"><stop offset="0" stop-color="#c4e4fc"/><stop offset="1" stop-color="#6aaee8"/></radialGradient></defs>
<path d="M1.5 16.5 L5 13" stroke="#3a3a3a" stroke-width="1.7" stroke-linecap="round"/>
<circle cx="8.5" cy="9.7" r="4.3" fill="url(#lens)" stroke="#c4c4c4" stroke-width="1.4"/>
<path d="M14 2v6M11 5h6" stroke="#10b020" stroke-width="2"/>
</svg>
<svg class="abs" style="left:245px;top:34px" width="18" height="18">
<path d="M1.5 16.5 L5.5 12.5" stroke="#b8b8b8" stroke-width="2" stroke-linecap="round"/>
<circle cx="8.5" cy="9.5" r="4.5" fill="#d0d0d0" stroke="#d0d0d0" stroke-width="1.2"/>
<path d="M11 4.5h6" stroke="#c4c4c4" stroke-width="2"/>
</svg>
<div class="abs" style="left:269px;top:36px;width:1px;height:15px;background:#c6c6c6"></div>
<svg class="abs" style="left:274px;top:35px" width="16" height="16">
<path d="M1.4 2.2 L4.4 11.1 L6.8 8.6 L11.8 13.6 L13.3 12.1 L8.3 7.1 L10.7 4.4 Z" fill="#fff" stroke="#2a2a2a" stroke-width="0.9" stroke-linejoin="round"/>
</svg>
<svg class="abs" style="left:292px;top:42px" width="6" height="4"><path d="M0 0h5.4L2.7 3.2z" fill="#111"/></svg>
<svg class="abs" style="left:304px;top:34px" width="17" height="18">
<rect x="1.5" y="1.5" width="13" height="15" fill="#fff" stroke="#888" stroke-width="1.2"/>
<defs><radialGradient id="lens2" cx="0.45" cy="0.45" r="0.6"><stop offset="0" stop-color="#b8dcf8"/><stop offset="1" stop-color="#5aa4e8"/></radialGradient></defs>
<path d="M0.8 16.6 L3.2 14.2" stroke="#222" stroke-width="1.6" stroke-linecap="round"/>
<circle cx="7.1" cy="9.85" r="4.1" fill="url(#lens2)" stroke="#c0c0c0" stroke-width="1.3"/>
</svg>
<div class="abs" style="left:327px;top:36px;width:1px;height:15px;background:#c6c6c6"></div>
<svg class="abs" style="left:332px;top:35px" width="18" height="17">
<path d="M9 2.5h8M3.3 5.9h13.6M9 9.4h8M3.3 13.5h13.6" stroke="#d4d4d4" stroke-width="0.9"/>
<path d="M1 0.8 H7.5 L9 2.25 L7.5 3.7 H1 Z" fill="#5cf018" stroke="#3a8a20" stroke-width="0.6"/>
<path d="M1 8 H7.5 L9 9.45 L7.5 10.9 H1 Z" fill="#ff2010" stroke="#902018" stroke-width="0.6"/>
<rect x="10.3" y="2.4" width="2.3" height="13.5" rx="0.6" fill="#80f050" stroke="#3a8a20" stroke-width="0.6"/>
<circle cx="11.45" cy="2.6" r="1.1" fill="#000"/>
<rect x="13.6" y="10.3" width="2.3" height="5.6" rx="0.6" fill="#ff5040" stroke="#902018" stroke-width="0.6"/>
<circle cx="14.75" cy="10.4" r="1.1" fill="#000"/>
</svg>
<svg class="abs" style="left:355px;top:34px" width="18" height="18">
<defs><linearGradient id="cg2" x1="0" y1="0" x2="0" y2="1"><stop offset="0" stop-color="#b0ff90"/><stop offset="1" stop-color="#50e010"/></linearGradient>
<linearGradient id="cr2" x1="0" y1="0" x2="0" y2="1"><stop offset="0" stop-color="#ff9080"/><stop offset="1" stop-color="#f02010"/></linearGradient></defs>
<rect x="1.4" y="1.2" width="15.3" height="15.2" rx="1" fill="#fafafa" stroke="#7a7a7a" stroke-width="1.3"/>
<path d="M2 4.4h14M2 6.8h14M2 9.2h14M2 11.6h14M2 14.05h14" stroke="#cfcfcf" stroke-width="0.7" stroke-dasharray="1 0.6"/>
<rect x="3.85" y="4.06" width="1.4" height="11.8" rx="0.7" fill="#000"/>
<rect x="8.25" y="2.2" width="1.4" height="10.3" rx="0.7" fill="#000"/>
<rect x="12.65" y="5.1" width="1.4" height="10.5" rx="0.7" fill="#000"/>
<rect x="3.2" y="5.6" width="2.7" height="8.45" rx="0.6" fill="url(#cg2)" stroke="#3a7a20" stroke-width="0.5"/>
<rect x="7.6" y="3.6" width="2.7" height="7.4" rx="0.6" fill="url(#cg2)" stroke="#3a7a20" stroke-width="0.5"/>
<rect x="12" y="6.5" width="2.7" height="7.2" rx="0.6" fill="url(#cr2)" stroke="#8a2a20" stroke-width="0.5"/>
</svg>
<svg class="abs" style="left:378px;top:34px" width="18" height="18">
<defs><linearGradient id="lg" x1="0" y1="0" x2="0" y2="1"><stop offset="0" stop-color="#ffffff"/><stop offset="0.45" stop-color="#e4e4e4"/><stop offset="1" stop-color="#a8a8a8"/></linearGradient></defs>
<rect x="1.2" y="1.3" width="15.6" height="15.1" rx="1.2" fill="url(#lg)" stroke="#767676" stroke-width="1.4"/>
<path d="M2.4 9.1 L4.5 4.6 L5.7 6.7 L9.7 2.9 L12.5 4.1 L14.9 6.7" fill="none" stroke="#2aa860" stroke-width="0.9"/>
<path d="M3.1 10.2 L4.5 11.7 L8.3 8.4 L11.6 9.3 L15.4 11.7" fill="none" stroke="#e83030" stroke-width="0.9"/>
</svg>
<svg class="abs" style="left:403px;top:35px" width="14" height="17">
<path d="M1.2 1.2 H9.7 L12.7 4.1 V14.7 H1.2 Z" fill="#fff" stroke="#808080" stroke-width="1.2"/>
<path d="M9.7 1.2 V4.1 H12.7" fill="none" stroke="#a0a0a0" stroke-width="0.7"/>
<path d="M7.1 3.4v1.4M7.1 11.4v1.4" stroke="#1e8c1e" stroke-width="1.2"/>
<path d="M9.6 5.6 C9 4.6 5 4.2 4.8 6.2 C4.7 8 9.6 7.6 9.6 9.8 C9.6 12 5.2 11.8 4.5 10.6" fill="none" stroke="#1e8c1e" stroke-width="2"/>
</svg>
<svg class="abs" style="left:425px;top:34px" width="16" height="18">
<rect x="1.3" y="1.3" width="13.5" height="15.3" rx="0.8" fill="#fbfcff" stroke="#7e7e7e" stroke-width="1.3"/>
<rect x="3" y="3" width="9.9" height="2.8" rx="0.5" fill="#3a9ae0"/>
<path d="M4 4.4h8" stroke="#a8c8e8" stroke-width="0.7"/>
<rect x="3.3" y="7.5" width="2.4" height="7" fill="#d8c8ff" stroke="#9a48f0" stroke-width="1"/>
<path d="M7.2 7.7h5.7M7.2 9.5h5.7M7.2 11.7h5.7M7.2 13.5h5.7" stroke="#c8d0e0" stroke-width="0.9"/>
</svg>
<div class="abs" style="left:8px;top:941px;width:1470px;height:1px;background:#fff"></div>
<div class="abs" style="left:8px;top:942px;width:1470px;height:23px;background:#f0f0f0"></div>
<div class="abs" style="left:8px;top:965px;width:1470px;height:1px;background:#dadada"></div>
<div class="abs" style="left:7px;top:941px;width:1px;height:25px;background:#dadada"></div>
<svg class="abs" style="left:12px;top:948px" width="9" height="10"><path d="M6.3 1.6 L2.4 4.9 L6.3 8.2" fill="none" stroke="#505050" stroke-width="2.3"/></svg>
<div class="abs" style="left:1424px;top:942px;width:37px;height:22px;background:#cdcdcd"></div>
<svg class="abs" style="left:1466px;top:948px" width="9" height="10"><path d="M1.7 1.6 L5.6 4.9 L1.7 8.2" fill="none" stroke="#505050" stroke-width="2.3"/></svg>
<div class="abs" style="left:1478px;top:941px;width:1px;height:25px;background:#dadada"></div>
<div class="abs" style="left:291px;top:357px;width:586px;height:491px;background:#ebebeb"></div>
<div class="abs txt" style="left:291px;top:364px;width:586px;text-align:center;font-size:15px;line-height:18px;color:#333;letter-spacing:-0.1px">Indicators</div>
<div class="abs" style="left:849px;top:363px;width:19px;height:19px;background:#b0b0b0"></div>
<svg class="abs" style="left:849px;top:363px" width="19" height="19"><path d="M7 7.5 L12 12.5 M12 7.5 L7 12.5" stroke="#fff" stroke-width="1.6"/></svg>
<div class="abs" style="left:298px;top:387px;width:571px;height:454px;background:#f0f0f0;border:1px solid #dedede"></div>
<div class="abs" style="left:299px;top:388px;width:570px;height:387px;border-top:1px solid #a0a0a0;border-left:1px solid #a0a0a0;border-bottom:1px solid #fff;border-right:1px solid #fff"></div>
<div class="abs" style="left:300px;top:389px;width:568px;height:385px;border-top:1px solid #696969;border-left:1px solid #696969;border-bottom:1px solid #e3e3e3;border-right:1px solid #e3e3e3"></div>
<div class="abs" style="left:301px;top:390px;width:251px;height:212px;background:#fff;border:1px solid #828790"></div>
<div class="abs" style="left:534px;top:392px;width:16px;height:208px;background:#f0f0f0"></div>
<div class="abs" style="left:535px;top:551px;width:14px;height:20px;background:#cdcdcd"></div>
<svg class="abs" style="left:537px;top:397px" width="9" height="8"><path d="M1.5 6 L4.5 2 L7.5 6" fill="none" stroke="#505050" stroke-width="1.8"/></svg>
<svg class="abs" style="left:537px;top:588px" width="9" height="8"><path d="M1.5 2 L4.5 6 L7.5 2" fill="none" stroke="#505050" stroke-width="1.8"/></svg>
<div class="abs" style="left:302px;top:391px;width:232px;height:210px;overflow:hidden">
<div class="abs txt" style="left:3px;top:2px;font-size:11px;line-height:13px;letter-spacing:-0.3px;white-space:nowrap">WoodiesCCIpanel</div>
<div class="abs txt" style="left:3px;top:15px;font-size:11px;line-height:13px;letter-spacing:-0.3px;white-space:nowrap">WoodiesCCIPatterns</div>
<div class="abs txt" style="left:3px;top:28px;font-size:11px;line-height:13px;letter-spacing:-0.3px;white-space:nowrap">WoodiesCCIProjector</div>
<div class="abs txt" style="left:3px;top:41px;font-size:11px;line-height:13px;letter-spacing:-0.3px;white-space:nowrap">WoodiesCCIWBCPatterns</div>
<div class="abs txt" style="left:3px;top:54px;font-size:11px;line-height:13px;letter-spacing:-0.3px;white-space:nowrap">WoodiesCCIWBCPatternsHTF</div>
<div class="abs txt" style="left:3px;top:67px;font-size:11px;line-height:13px;letter-spacing:-0.3px;white-space:nowrap">WoodiesCurrentDayOHL</div>
<div class="abs txt" style="left:3px;top:80px;font-size:11px;line-height:13px;letter-spacing:-0.3px;white-space:nowrap">WoodiesDivergence</div>
<div class="abs txt" style="left:3px;top:93px;font-size:11px;line-height:13px;letter-spacing:-0.3px;white-space:nowrap">WoodiesEconomicCalendar</div>
<div class="abs txt" style="left:3px;top:106px;font-size:11px;line-height:13px;letter-spacing:-0.3px;white-space:nowrap">WoodiesHTFBias</div>
<div class="abs txt" style="left:3px;top:119px;font-size:11px;line-height:13px;letter-spacing:-0.3px;white-space:nowrap">WoodiesMovingCCI</div>
<div class="abs txt" style="left:3px;top:132px;font-size:11px;line-height:13px;letter-spacing:-0.3px;white-space:nowrap">WoodiesOrderFlowAnalysis</div>
<div class="abs txt" style="left:3px;top:145px;font-size:11px;line-height:13px;letter-spacing:-0.3px;white-space:nowrap">WoodiesOrderFlowBar</div>
<div class="abs txt" style="left:3px;top:158px;font-size:11px;line-height:13px;letter-spacing:-0.3px;white-space:nowrap">WoodiesPivots</div>
<div class="abs txt" style="left:3px;top:171px;font-size:11px;line-height:13px;letter-spacing:-0.3px;white-space:nowrap">WoodiesPriceLine</div>
<div class="abs txt" style="left:3px;top:184px;font-size:11px;line-height:13px;letter-spacing:-0.3px;white-space:nowrap">WoodiesRangeFinderStats</div>
<div class="abs txt" style="left:3px;top:197px;font-size:11px;line-height:13px;letter-spacing:-0.3px;white-space:nowrap">WoodiesReversalBar</div>
</div>
<div class="abs" style="left:301px;top:607px;width:251px;height:121px;background:#fff;border:1px solid #828790"></div>
<div class="abs" style="left:303px;top:661px;width:247px;height:13px;background:#3399ff"></div>
<div class="abs" style="left:302px;top:608px;width:249px;height:119px;overflow:hidden">
<div class="abs txt" style="left:3px;top:2px;font-size:11px;line-height:13px;letter-spacing:-0.2px;white-space:nowrap;color:#000">WoodiesCCIWBCPatternsHTF(NQ 06-15 (150 Tick)</div>
<div class="abs txt" style="left:3px;top:15px;font-size:11px;line-height:13px;letter-spacing:-0.2px;white-space:nowrap;color:#000">WoodiesCurrentDayOHL(NQ 06-15 (150 Tick))</div>
<div class="abs txt" style="left:3px;top:28px;font-size:11px;line-height:13px;letter-spacing:-0.2px;white-space:nowrap;color:#000">WoodiesDivergence(NQ 06-15 (150 Tick),4,1,0)</div>
<div class="abs txt" style="left:3px;top:41px;font-size:11px;line-height:13px;letter-spacing:-0.2px;white-space:nowrap;color:#000">WoodiesEconomicCalendar(NQ 06-15 (150 Tick))</div>
<div class="abs txt" style="left:3px;top:54px;font-size:11px;line-height:13px;letter-spacing:-0.2px;white-space:nowrap;color:#fff">WoodiesHTFBias(NQ 06-15 (150 Tick))</div>
</div>
<div class="abs btn" style="left:324px;top:744px;width:66px;height:23px;border:1px solid #d2d2d2;background:#f1f1f1;color:#a6a6a6;line-height:19px">New</div>
<div class="abs btn" style="left:461px;top:744px;width:66px;height:23px;border:1px solid #acacac;background:linear-gradient(#f0f0f0,#e3e3e3);color:#111;line-height:19px">Remove</div>
<div class="abs" style="left:608px;top:390px;width:259px;height:321px;background:#c8c8c8;border:1px solid #a0a0a0"></div>
<svg class="abs" style="left:611px;top:395px" width="9" height="9"><rect x="0.5" y="0.5" width="8" height="8" fill="#f4f4f4" stroke="#000"/><rect x="2" y="4" width="5" height="1" fill="#000"/></svg>
<div class="abs txt" style="left:626px;top:391px;font-size:11.5px;line-height:16px;font-weight:bold;letter-spacing:0px">Data</div>
<div class="abs" style="left:610px;top:407px;width:240px;height:1px;background:#c8c8c8"></div>
<div class="abs" style="left:623px;top:408px;width:106px;height:15px;background:#fff"></div>
<div class="abs" style="left:730px;top:408px;width:120px;height:15px;background:#fff"></div>
<div class="abs" style="left:623px;top:408px;width:106px;height:15px;overflow:hidden"><div class="abs txt" style="left:3px;top:1px;font-size:11px;line-height:15px;white-space:nowrap;letter-spacing:0.05px">Calculate on bar close</div></div>
<div class="abs" style="left:730px;top:408px;width:120px;height:15px;overflow:hidden"><div class="abs txt" style="left:4px;top:1px;font-size:11px;line-height:15px;font-weight:bold;white-space:nowrap;letter-spacing:0.33px">False</div></div>
<div class="abs" style="left:623px;top:424px;width:106px;height:15px;background:#fff"></div>
<div class="abs" style="left:730px;top:424px;width:120px;height:15px;background:#fff"></div>
<div class="abs" style="left:623px;top:424px;width:106px;height:15px;overflow:hidden"><div class="abs txt" style="left:3px;top:1px;font-size:11px;line-height:15px;white-space:nowrap;letter-spacing:0.05px">Input series</div></div>
<div class="abs" style="left:730px;top:424px;width:120px;height:15px;overflow:hidden"><div class="abs txt" style="left:4px;top:1px;font-size:11px;line-height:15px;font-weight:bold;white-space:nowrap;letter-spacing:0.33px">NQ <span style="letter-spacing:1.1px">06</span>-<span style="letter-spacing:1.1px">15</span> (<span style="letter-spacing:1.1px">150</span> Tick)</div></div>
<div class="abs" style="left:623px;top:440px;width:106px;height:15px;background:#fff"></div>
<div class="abs" style="left:730px;top:440px;width:120px;height:15px;background:#fff"></div>
<div class="abs" style="left:623px;top:440px;width:106px;height:15px;overflow:hidden"><div class="abs txt" style="left:3px;top:1px;font-size:11px;line-height:15px;white-space:nowrap;letter-spacing:0.05px">Maximum bars look back</div></div>
<div class="abs" style="left:730px;top:440px;width:120px;height:15px;overflow:hidden"><div class="abs txt" style="left:4px;top:1px;font-size:11px;line-height:15px;font-weight:bold;white-space:nowrap;letter-spacing:0.33px">TwoHundredFiftySix</div></div>
<svg class="abs" style="left:611px;top:459px" width="9" height="9"><rect x="0.5" y="0.5" width="8" height="8" fill="#f4f4f4" stroke="#000"/><rect x="2" y="4" width="5" height="1" fill="#000"/></svg>
<div class="abs txt" style="left:626px;top:455px;font-size:11.5px;line-height:16px;font-weight:bold;letter-spacing:0px">Visual</div>
<div class="abs" style="left:610px;top:471px;width:240px;height:1px;background:#c8c8c8"></div>
<div class="abs" style="left:623px;top:472px;width:106px;height:15px;background:#fff"></div>
<div class="abs" style="left:730px;top:472px;width:120px;height:15px;background:#fff"></div>
<div class="abs" style="left:623px;top:472px;width:106px;height:15px;overflow:hidden"><div class="abs txt" style="left:3px;top:1px;font-size:11px;line-height:15px;white-space:nowrap;letter-spacing:0.05px">Auto scale</div></div>
<div class="abs" style="left:730px;top:472px;width:120px;height:15px;overflow:hidden"><div class="abs txt" style="left:4px;top:1px;font-size:11px;line-height:15px;font-weight:bold;white-space:nowrap;letter-spacing:0.33px">True</div></div>
<div class="abs" style="left:623px;top:488px;width:106px;height:15px;background:#fff"></div>
<div class="abs" style="left:730px;top:488px;width:120px;height:15px;background:#fff"></div>
<div class="abs" style="left:623px;top:488px;width:106px;height:15px;overflow:hidden"><div class="abs txt" style="left:3px;top:1px;font-size:11px;line-height:15px;white-space:nowrap;letter-spacing:0.05px">Displacement</div></div>
<div class="abs" style="left:730px;top:488px;width:120px;height:15px;overflow:hidden"><div class="abs txt" style="left:4px;top:1px;font-size:11px;line-height:15px;font-weight:bold;white-space:nowrap;letter-spacing:0.33px"><span style="letter-spacing:1.1px">0</span></div></div>
<div class="abs" style="left:623px;top:504px;width:106px;height:15px;background:#fff"></div>
<div class="abs" style="left:730px;top:504px;width:120px;height:15px;background:#fff"></div>
<div class="abs" style="left:623px;top:504px;width:106px;height:15px;overflow:hidden"><div class="abs txt" style="left:3px;top:1px;font-size:11px;line-height:15px;white-space:nowrap;letter-spacing:0.05px">Display in Data Box</div></div>
<div class="abs" style="left:730px;top:504px;width:120px;height:15px;overflow:hidden"><div class="abs txt" style="left:4px;top:1px;font-size:11px;line-height:15px;font-weight:bold;white-space:nowrap;letter-spacing:0.33px">True</div></div>
<div class="abs" style="left:623px;top:520px;width:106px;height:15px;background:#c8c8c8"></div>
<div class="abs" style="left:730px;top:520px;width:120px;height:15px;background:#fff"></div>
<div class="abs" style="left:623px;top:520px;width:106px;height:15px;overflow:hidden"><div class="abs txt" style="left:3px;top:1px;font-size:11px;line-height:15px;white-space:nowrap;letter-spacing:0.05px">Label</div></div>
<div class="abs" style="left:730px;top:520px;width:120px;height:15px;overflow:hidden"><div class="abs txt" style="left:4px;top:1px;font-size:11px;line-height:15px;font-weight:bold;white-space:nowrap;letter-spacing:0.33px"></div></div>
<div class="abs" style="left:623px;top:536px;width:106px;height:15px;background:#fff"></div>
<div class="abs" style="left:730px;top:536px;width:120px;height:15px;background:#fff"></div>
<div class="abs" style="left:623px;top:536px;width:106px;height:15px;overflow:hidden"><div class="abs txt" style="left:3px;top:1px;font-size:11px;line-height:15px;white-space:nowrap;letter-spacing:0.05px">Panel</div></div>
<div class="abs" style="left:730px;top:536px;width:120px;height:15px;overflow:hidden"><div class="abs txt" style="left:4px;top:1px;font-size:11px;line-height:15px;font-weight:bold;white-space:nowrap;letter-spacing:0.33px">Same as input series</div></div>
<div class="abs" style="left:623px;top:552px;width:106px;height:15px;background:#fff"></div>
<div class="abs" style="left:730px;top:552px;width:120px;height:15px;background:#fff"></div>
<div class="abs" style="left:623px;top:552px;width:106px;height:15px;overflow:hidden"><div class="abs txt" style="left:3px;top:1px;font-size:11px;line-height:15px;white-space:nowrap;letter-spacing:0.05px">Price marker(s)</div></div>
<div class="abs" style="left:730px;top:552px;width:120px;height:15px;overflow:hidden"><div class="abs txt" style="left:4px;top:1px;font-size:11px;line-height:15px;font-weight:bold;white-space:nowrap;letter-spacing:0.33px">False</div></div>
<div class="abs" style="left:623px;top:568px;width:106px;height:15px;background:#fff"></div>
<div class="abs" style="left:730px;top:568px;width:120px;height:15px;background:#fff"></div>
<div class="abs" style="left:623px;top:568px;width:106px;height:15px;overflow:hidden"><div class="abs txt" style="left:3px;top:1px;font-size:11px;line-height:15px;white-space:nowrap;letter-spacing:0.05px">Scale justification</div></div>
<div class="abs" style="left:730px;top:568px;width:120px;height:15px;overflow:hidden"><div class="abs txt" style="left:4px;top:1px;font-size:11px;line-height:15px;font-weight:bold;white-space:nowrap;letter-spacing:0.33px">Right</div></div>
<svg class="abs" style="left:611px;top:587px" width="9" height="9"><rect x="0.5" y="0.5" width="8" height="8" fill="#f4f4f4" stroke="#000"/><rect x="2" y="4" width="5" height="1" fill="#000"/></svg>
<div class="abs txt" style="left:626px;top:583px;font-size:11.5px;line-height:16px;font-weight:bold;letter-spacing:0px">General</div>
<div class="abs" style="left:610px;top:599px;width:240px;height:1px;background:#c8c8c8"></div>
<div class="abs" style="left:623px;top:600px;width:106px;height:15px;background:#fff"></div>
<div class="abs" style="left:730px;top:600px;width:120px;height:15px;background:#fff"></div>
<div class="abs" style="left:623px;top:600px;width:106px;height:15px;overflow:hidden"><div class="abs txt" style="left:3px;top:1px;font-size:11px;line-height:15px;white-space:nowrap;letter-spacing:0.05px">Pip Size Adjustment</div></div>
<div class="abs" style="left:730px;top:600px;width:120px;height:15px;overflow:hidden"><div class="abs txt" style="left:4px;top:1px;font-size:11px;line-height:15px;font-weight:bold;white-space:nowrap;letter-spacing:0.33px"><span style="letter-spacing:1.1px">1</span></div></div>
<svg class="abs" style="left:611px;top:619px" width="9" height="9"><rect x="0.5" y="0.5" width="8" height="8" fill="#f4f4f4" stroke="#000"/><rect x="2" y="4" width="5" height="1" fill="#000"/></svg>
<div class="abs txt" style="left:626px;top:615px;font-size:11.5px;line-height:16px;font-weight:bold;letter-spacing:0px">Graphics</div>
<div class="abs" style="left:610px;top:631px;width:240px;height:1px;background:#c8c8c8"></div>
<div class="abs" style="left:623px;top:632px;width:106px;height:15px;background:#fff"></div>
<div class="abs" style="left:730px;top:632px;width:120px;height:15px;background:#fff"></div>
<div class="abs" style="left:623px;top:632px;width:106px;height:15px;overflow:hidden"><div class="abs txt" style="left:3px;top:1px;font-size:11px;line-height:15px;white-space:nowrap;letter-spacing:0.05px">Background Colour Alpha</div></div>
<div class="abs" style="left:730px;top:632px;width:120px;height:15px;overflow:hidden"><div class="abs txt" style="left:4px;top:1px;font-size:11px;line-height:15px;font-weight:bold;white-space:nowrap;letter-spacing:0.33px"><span style="letter-spacing:1.1px">50</span></div></div>
<div class="abs" style="left:623px;top:648px;width:106px;height:15px;background:#fff"></div>
<div class="abs" style="left:730px;top:648px;width:120px;height:15px;background:#fff"></div>
<div class="abs" style="left:623px;top:648px;width:106px;height:15px;overflow:hidden"><div class="abs txt" style="left:3px;top:1px;font-size:11px;line-height:15px;white-space:nowrap;letter-spacing:0.05px">Down BG color</div></div>
<div class="abs" style="left:731px;top:649px;width:20px;height:13px;background:#ff1493;border:1px solid #000"></div>
<div class="abs" style="left:730px;top:648px;width:120px;height:15px;overflow:hidden"><div class="abs txt" style="left:30px;top:1px;font-size:11px;line-height:15px;font-weight:bold;white-space:nowrap;letter-spacing:0.4px">DeepPink</div></div>
<div class="abs" style="left:623px;top:664px;width:106px;height:15px;background:#fff"></div>
<div class="abs" style="left:730px;top:664px;width:120px;height:15px;background:#fff"></div>
<div class="abs" style="left:623px;top:664px;width:106px;height:15px;overflow:hidden"><div class="abs txt" style="left:3px;top:1px;font-size:11px;line-height:15px;white-space:nowrap;letter-spacing:0.05px">HTF color Down</div></div>
<div class="abs" style="left:731px;top:665px;width:20px;height:13px;background:#ffa500;border:1px solid #000"></div>
<div class="abs" style="left:730px;top:664px;width:120px;height:15px;overflow:hidden"><div class="abs txt" style="left:30px;top:1px;font-size:11px;line-height:15px;font-weight:bold;white-space:nowrap;letter-spacing:0.4px">Orange</div></div>
<div class="abs" style="left:623px;top:680px;width:106px;height:15px;background:#fff"></div>
<div class="abs" style="left:730px;top:680px;width:120px;height:15px;background:#fff"></div>
<div class="abs" style="left:623px;top:680px;width:106px;height:15px;overflow:hidden"><div class="abs txt" style="left:3px;top:1px;font-size:11px;line-height:15px;white-space:nowrap;letter-spacing:0.05px">HTF color UP</div></div>
<div class="abs" style="left:731px;top:681px;width:20px;height:13px;background:#0000cd;border:1px solid #000"></div>
<div class="abs" style="left:730px;top:680px;width:120px;height:15px;overflow:hidden"><div class="abs txt" style="left:30px;top:1px;font-size:11px;line-height:15px;font-weight:bold;white-space:nowrap;letter-spacing:0.4px">MediumBlue</div></div>
<div class="abs" style="left:623px;top:696px;width:106px;height:15px;background:#fff"></div>
<div class="abs" style="left:730px;top:696px;width:120px;height:15px;background:#fff"></div>
<div class="abs" style="left:623px;top:696px;width:106px;height:15px;overflow:hidden"><div class="abs txt" style="left:3px;top:1px;font-size:11px;line-height:15px;white-space:nowrap;letter-spacing:0.05px">Up BG color</div></div>
<div class="abs" style="left:731px;top:697px;width:20px;height:13px;background:#4169e1;border:1px solid #000"></div>
<div class="abs" style="left:730px;top:696px;width:120px;height:15px;overflow:hidden"><div class="abs txt" style="left:30px;top:1px;font-size:11px;line-height:15px;font-weight:bold;white-space:nowrap;letter-spacing:0.4px">RoyalBlue</div></div>
<div class="abs" style="left:849px;top:391px;width:17px;height:319px;background:#f0f0f0"></div>
<div class="abs" style="left:850px;top:408px;width:15px;height:246px;background:#c8c8c8"></div>
<svg class="abs" style="left:853px;top:396px" width="9" height="8"><path d="M1.5 6 L4.5 2 L7.5 6" fill="none" stroke="#505050" stroke-width="1.8"/></svg>
<svg class="abs" style="left:853px;top:697px" width="9" height="8"><path d="M1.5 2 L4.5 6 L7.5 2" fill="none" stroke="#505050" stroke-width="1.8"/></svg>
<div class="abs" style="left:608px;top:714px;width:259px;height:59px;background:#f0f0f0;border:1px solid #a0a0a0"></div>
<div class="abs txt" style="left:613px;top:717px;font-size:11.5px;line-height:14px;font-weight:bold;letter-spacing:0.4px">Label</div>
<div class="abs txt" style="left:613px;top:732px;font-size:11px;line-height:13px;letter-spacing:0.05px;white-space:nowrap">WoodiesHTFBias 7.0.1.6&nbsp; - Copyright 2011 to<br>2013 MicroTrends Ltd All Rights Reserved</div>
<div class="abs btn" style="left:388px;top:804px;width:79px;height:23px;border:1px solid #acacac;background:linear-gradient(#f0f0f0,#e3e3e3);color:#111;line-height:19px">OK</div>
<div class="abs btn" style="left:545px;top:804px;width:78px;height:23px;border:1px solid #3c94f0;background:linear-gradient(#ececec,#e2e2e2);color:#111;line-height:19px">Apply</div>
<div class="abs btn" style="left:702px;top:804px;width:78px;height:23px;border:1px solid #acacac;background:linear-gradient(#f0f0f0,#e3e3e3);color:#111;line-height:19px">Close</div>
<svg class="abs" style="left:858px;top:830px" width="9" height="9"><rect x="6" y="0" width="2" height="2" fill="#b8b8b8"/><rect x="3" y="3" width="2" height="2" fill="#b8b8b8"/><rect x="6" y="3" width="2" height="2" fill="#b8b8b8"/><rect x="0" y="6" width="2" height="2" fill="#b8b8b8"/><rect x="3" y="6" width="2" height="2" fill="#b8b8b8"/><rect x="6" y="6" width="2" height="2" fill="#b8b8b8"/></svg>
</body></html>
